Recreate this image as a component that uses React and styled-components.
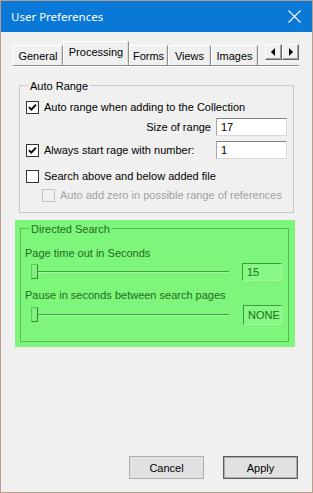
import React from "react";
import styled, { createGlobalStyle } from "styled-components";

const GlobalStyle = createGlobalStyle`
  html, body {
    margin: 0;
    padding: 0;
    background: #fff;
  }
  * {
    box-sizing: border-box;
  }
`;

const tabs = [
  { label: "General", width: 50 },
  { label: "Processing", width: 66, active: true },
  { label: "Forms", width: 39 },
  { label: "Views", width: 43 },
  { label: "Images", width: 47 },
];

const Check = ({ checked, disabled }) => (
  <Box disabled={disabled}>
    {checked && (
      <svg width="9" height="9" viewBox="0 0 9 9">
        <path d="M1 4.2 L3.3 6.6 L8 1.6" fill="none" stroke="#000" strokeWidth="1.8" />
      </svg>
    )}
  </Box>
);

const Arrow = ({ dir }) => (
  <ArrowBtn>
    <svg width="5" height="8" viewBox="0 0 5 8">
      {dir === "left" ? <path d="M4 0 L0 4 L4 8 Z" fill="#000" /> : <path d="M1 0 L5 4 L1 8 Z" fill="#000" />}
    </svg>
  </ArrowBtn>
);

const App = () => {
  return (
    <>
      <GlobalStyle />
      <Window>
        <TitleBar>
          <Title>User Preferences</Title>
          <svg width="13" height="13" viewBox="0 0 13 13">
            <path d="M0.5 0.5 L12.5 12.5 M12.5 0.5 L0.5 12.5" stroke="#fff" strokeWidth="1.1" />
          </svg>
        </TitleBar>
        <Body>
          <TabStrip>
            {tabs.map((t) => (
              <Tab key={t.label} width={t.width} active={t.active}>
                {t.label}
              </Tab>
            ))}
            <Arrows>
              <Arrow dir="left" />
              <Arrow dir="right" />
            </Arrows>
          </TabStrip>
          <Panel>
            <GroupBox>
              <Legend>Auto Range</Legend>
              <Row mt={5} h={18}>
                <Check checked />
                <Label>Auto range when adding to the Collection</Label>
              </Row>
              <Row mt={1} h={19}>
                <Label right>Size of range</Label>
                <Field>17</Field>
              </Row>
              <Row mt={5} h={18}>
                <Check checked />
                <Label>Always start rage with number:</Label>
                <Field>1</Field>
              </Row>
              <Row mt={8} h={18}>
                <Check />
                <Label>Search above and below added file</Label>
              </Row>
              <Row mt={1} h={18} indent={16}>
                <Check disabled />
                <Label disabled>Auto add zero in possible range of references</Label>
              </Row>
            </GroupBox>
            <Highlight>
              <GreenGroup>
                <Legend green>Directed Search</Legend>
                <GreenLabel mt={10}>Page time out in Seconds</GreenLabel>
                <SliderRow mt={3} h={18}>
                  <Slider>
                    <Thumb />
                  </Slider>
                  <GreenField w={40}>15</GreenField>
                </SliderRow>
                <GreenLabel mt={7}>Pause in seconds between search pages</GreenLabel>
                <SliderRow mt={3} h={20}>
                  <Slider>
                    <Thumb />
                  </Slider>
                  <GreenField w={39}>NONE</GreenField>
                </SliderRow>
              </GreenGroup>
            </Highlight>
          </Panel>
          <Buttons>
            <Button>Cancel</Button>
            <Button primary>Apply</Button>
          </Buttons>
        </Body>
      </Window>
    </>
  );
};

const Window = styled.div`
  width: 313px;
  height: 493px;
  border: 1px solid #b89e8f;
  background: #f0f0f0;
  display: flex;
  flex-direction: column;
  font-family: "Liberation Sans", Arial, sans-serif;
  font-size: 11px;
  color: #000;
`;

const TitleBar = styled.div`
  height: 31px;
  background: #0a78d7;
  color: #fff;
  display: flex;
  align-items: center;
  justify-content: space-between;
  padding: 0 11px 0 10px;
`;

const Title = styled.span`
  font-family: "Noto Sans", "Open Sans", sans-serif;
  font-size: 11.5px;
`;

const Body = styled.div`
  flex: 1;
  display: flex;
  flex-direction: column;
  padding: 9px 13px 13px 12px;
`;

const TabStrip = styled.div`
  height: 25px;
  display: flex;
  align-items: flex-end;
  border-bottom: 1px solid #8e8e8e;
  box-shadow: 0 1px 0 #fff;
`;

const Tab = styled.div`
  width: ${(p) => p.width}px;
  height: ${(p) => (p.active ? 24 : 20)}px;
  display: flex;
  align-items: center;
  justify-content: center;
  padding-bottom: ${(p) => (p.active ? 3 : 0)}px;
  border-top: 1px solid #fff;
  border-left: 1px solid #fff;
  border-right: 1px solid #8e8e8e;
  box-shadow: inset -1px 0 0 #dcdcdc;
  background: #f0f0f0;
  white-space: nowrap;
  font-size: 11px;
  position: relative;
  z-index: ${(p) => (p.active ? 1 : 0)};
`;

const Arrows = styled.div`
  margin-left: auto;
  align-self: flex-start;
  margin-top: 3px;
  display: flex;
`;

const ArrowBtn = styled.div`
  width: 17px;
  height: 16px;
  display: flex;
  align-items: center;
  justify-content: center;
  background: #f0f0f0;
  border-top: 1px solid #fff;
  border-left: 1px solid #fff;
  border-right: 1px solid #696969;
  border-bottom: 1px solid #696969;
  box-shadow: inset -1px -1px 0 #a0a0a0;
`;

const Panel = styled.div`
  padding: 0 5px 0 6px;
  display: flex;
  flex-direction: column;
`;

const GroupBox = styled.div`
  margin-top: 19px;
  height: 128px;
  border: 1px solid #c8c8c8;
  padding: 0 6px;
  display: flex;
  flex-direction: column;
`;

const Legend = styled.span`
  align-self: flex-start;
  margin: -7px 0 0 ${(p) => (p.green ? 4 : 2)}px;
  padding: 0 2px;
  line-height: 14px;
  background: ${(p) => (p.green ? "#7ef57b" : "#f0f0f0")};
  color: ${(p) => (p.green ? "#1d6e1b" : "#000")};
  font-size: 11px;
`;

const Row = styled.div`
  margin-top: ${(p) => p.mt}px;
  height: ${(p) => p.h}px;
  padding-left: ${(p) => p.indent || 0}px;
  display: flex;
  align-items: center;
`;

const Box = styled.span`
  width: 13px;
  height: 13px;
  flex: none;
  border: 1px solid ${(p) => (p.disabled ? "#c4c4c4" : "#333")};
  background: ${(p) => (p.disabled ? "#f0f0f0" : "#fff")};
  display: flex;
  align-items: center;
  justify-content: center;
  margin-right: 5px;
`;

const Label = styled.span`
  font-size: 11px;
  color: ${(p) => (p.disabled ? "#a0a0a0" : "#000")};
  white-space: nowrap;
  flex: ${(p) => (p.right ? 1 : "none")};
  text-align: ${(p) => (p.right ? "right" : "left")};
  margin-right: ${(p) => (p.right ? 5 : 0)}px;
`;

const Field = styled.div`
  margin-left: auto;
  width: 71px;
  height: 18px;
  background: #fff;
  border: 1px solid #dadada;
  border-top-color: #828282;
  border-left-color: #a8a8a8;
  padding-left: 4px;
  display: flex;
  align-items: center;
  font-size: 11px;
`;

const Highlight = styled.div`
  margin: 7px -1px 0 -4px;
  background: #7ef57b;
  padding: 8px 6px 5px 5px;
`;

const GreenGroup = styled.div`
  height: 114px;
  border: 1px solid #4fc04c;
  padding: 0 6px 0 4px;
  display: flex;
  flex-direction: column;
`;

const GreenLabel = styled.span`
  margin-top: ${(p) => p.mt}px;
  line-height: 14px;
  font-size: 11px;
  color: #1d6e1b;
  white-space: nowrap;
`;

const SliderRow = styled.div`
  margin-top: ${(p) => p.mt}px;
  height: ${(p) => p.h}px;
  display: flex;
  align-items: center;
`;

const Slider = styled.div`
  position: relative;
  margin-left: 6px;
  width: 198px;
  height: 2px;
  background: #3fa23c;
  border-bottom: 1px solid #a8f8a6;
`;

const Thumb = styled.span`
  position: absolute;
  left: 0;
  top: -7px;
  width: 7px;
  height: 15px;
  background: #86ef83;
  border: 1px solid #5ccc59;
  border-right-color: #2f8c2d;
  border-bottom-color: #2f8c2d;
`;

const GreenField = styled.div`
  margin-left: auto;
  width: ${(p) => p.w}px;
  height: 100%;
  background: #86f884;
  border: 1px solid #a6faa4;
  border-top-color: #3b9e38;
  border-left-color: #3b9e38;
  padding-left: 4px;
  display: flex;
  align-items: center;
  color: #1d6e1b;
  font-size: 11px;
`;

const Buttons = styled.div`
  margin-top: auto;
  display: flex;
  justify-content: flex-end;
  gap: 19px;
  padding-right: 1px;
`;

const Button = styled.button`
  width: 75px;
  height: 23px;
  font-family: "Liberation Sans", Arial, sans-serif;
  font-size: 11px;
  color: #000;
  background: #e1e1e1;
  border: 1px solid ${(p) => (p.primary ? "#5a5a5a" : "#adadad")};
  box-shadow: ${(p) => (p.primary ? "inset 0 0 0 1px #adadad" : "none")};
  padding: 0;
`;

export default App;
